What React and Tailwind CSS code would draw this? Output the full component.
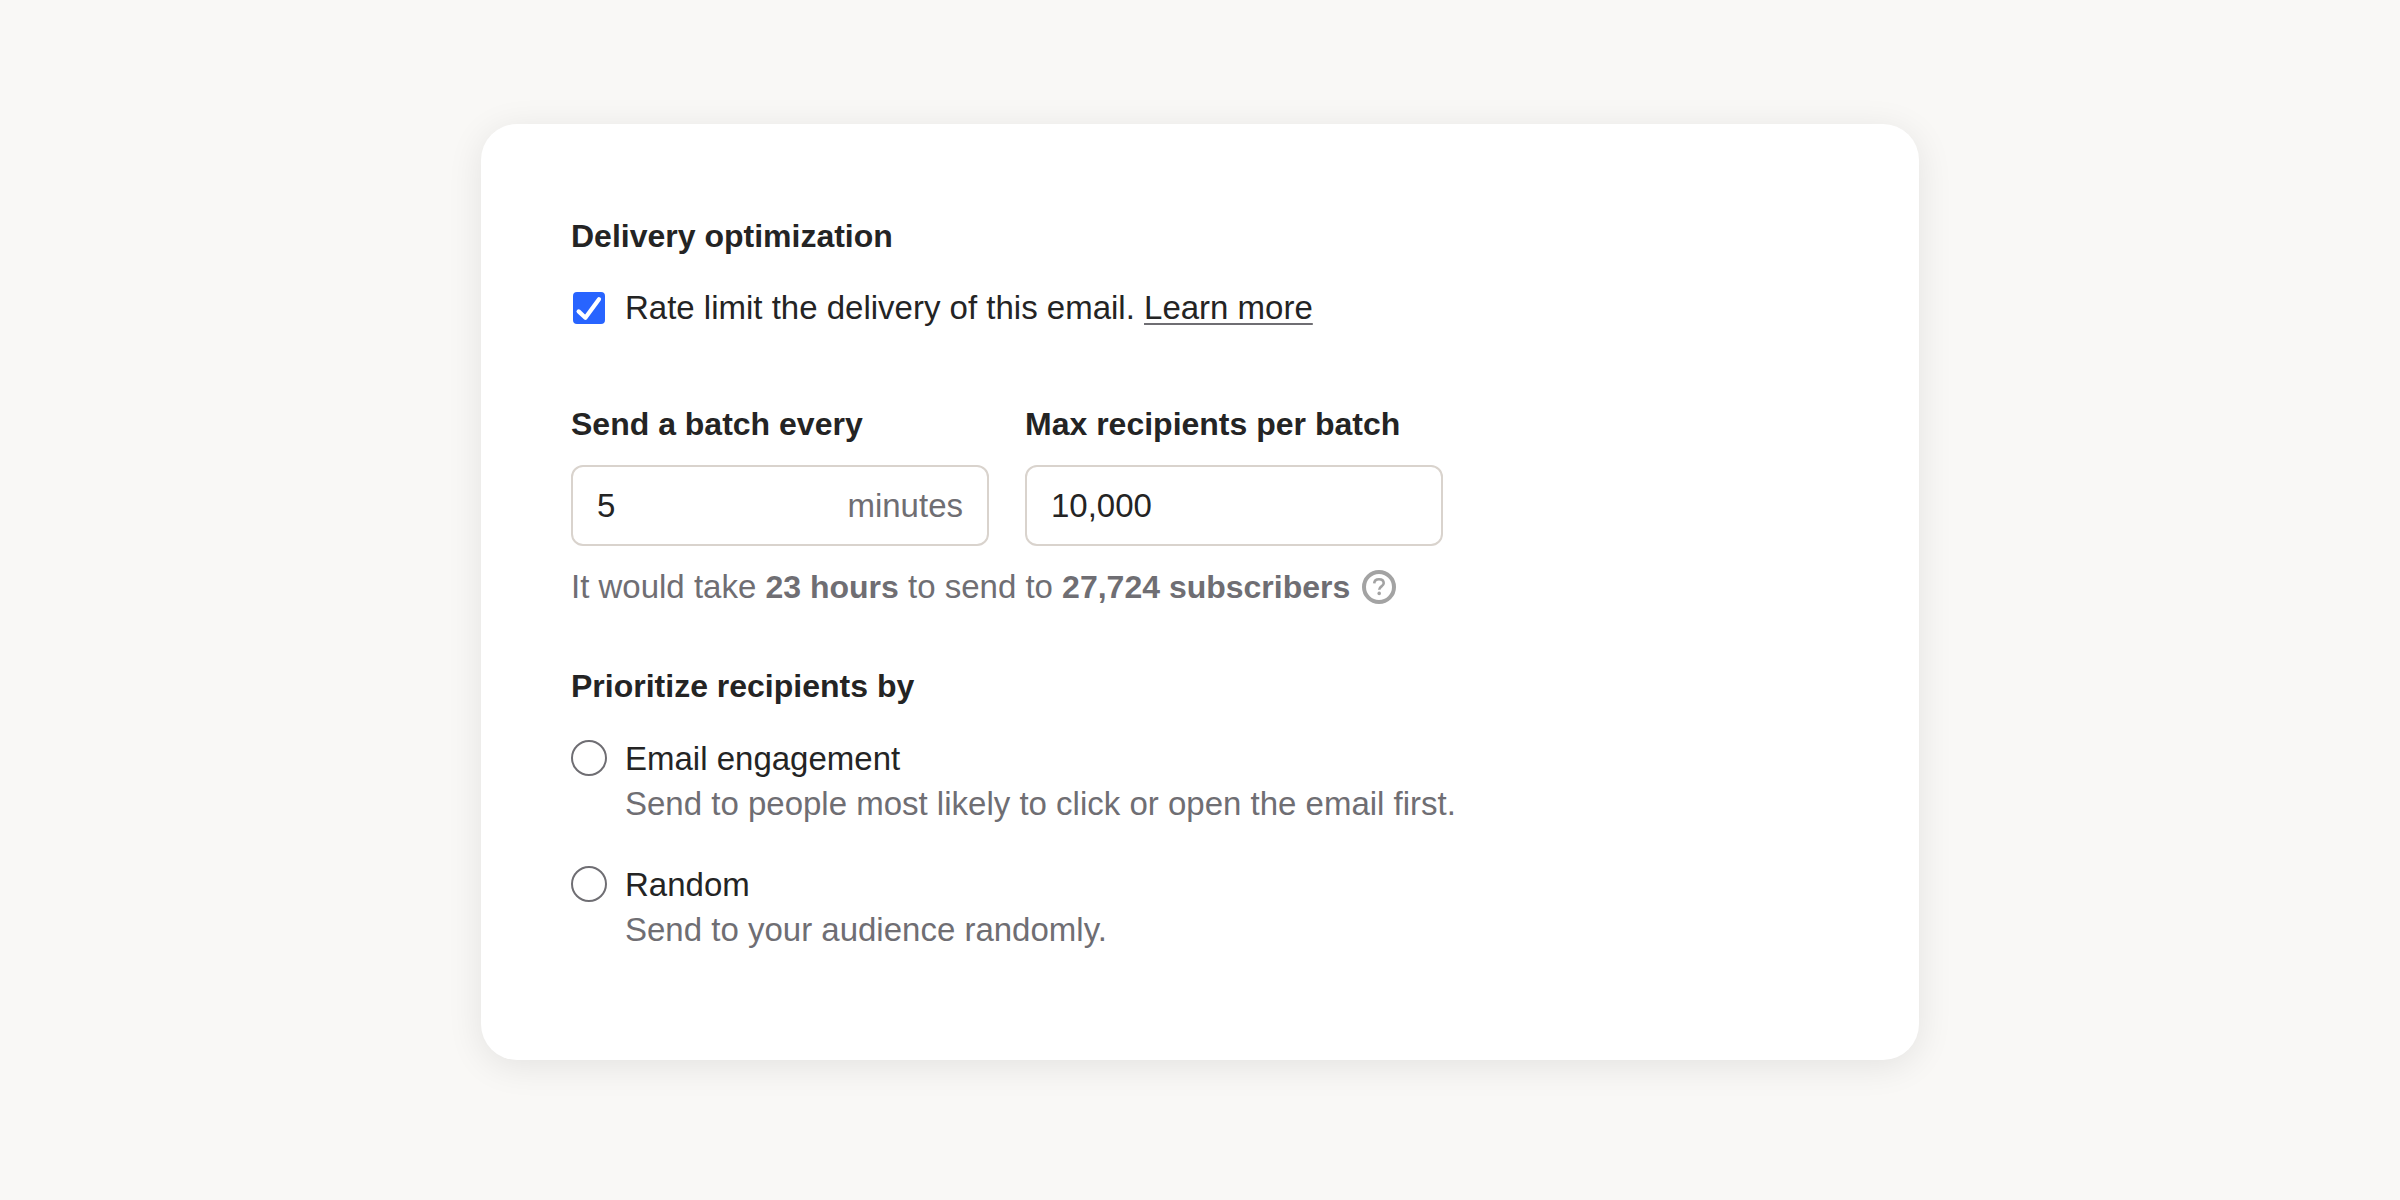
const priorities = [
  {
    id: "engagement",
    label: "Email engagement",
    hint: "Send to people most likely to click or open the email first.",
  },
  { id: "random", label: "Random", hint: "Send to your audience randomly." },
];

function HelpIcon() {
  return (
    <svg viewBox="0 0 34 34" className="size-[34px]" fill="none" aria-hidden="true">
      <circle cx="17" cy="17" r="15" stroke="#a3a3a3" strokeWidth="4" />
      <path
        d="M12.2 13.4C12.4 10.4 14.2 9.2 17 9.2C19.8 9.2 21.7 10.8 21.7 13.2C21.7 16.4 17.2 16.4 17.2 19.8"
        stroke="#a3a3a3"
        strokeWidth="2.6"
      />
      <circle cx="17.2" cy="23.4" r="1.8" fill="#a3a3a3" />
    </svg>
  );
}

function Field({ id, label, value, suffix }) {
  return (
    <div className="w-[418px]">
      <label htmlFor={id} className="block text-[32px] leading-[45px] font-bold">
        {label}
      </label>
      <div className="mt-[18px] flex items-center rounded-xl border-2 border-[#d9d3cd] px-6 py-4">
        <input
          id={id}
          type="text"
          inputMode="numeric"
          defaultValue={value}
          className="w-0 min-w-0 flex-1 bg-transparent outline-none"
        />
        {suffix && <span className="text-[#6f6e73]">{suffix}</span>}
      </div>
    </div>
  );
}

export default function App() {
  return (
    <main className="min-h-screen bg-[#f9f8f6] px-6 pt-[124px] pb-24 font-['Liberation_Sans',Arial,sans-serif] text-[33px] leading-[45px] text-[#242424]">
      <form className="mx-auto w-full max-w-[1438px] rounded-[36px] bg-white px-[90px] pt-[90px] pb-[108px] shadow-[0_6px_36px_rgba(0,0,0,0.09)]">
        <h2 className="text-[32px] leading-[45px] font-bold">Delivery optimization</h2>

        <div className="mt-[26px] flex items-center gap-[18px]">
          <span className="grid size-9 shrink-0 place-items-center">
            <input
              id="rate-limit"
              type="checkbox"
              defaultChecked
              className="peer col-start-1 row-start-1 size-8 appearance-none rounded border-2 border-[#2864ff] checked:bg-[#2864ff]"
            />
            <svg
              viewBox="0 0 32 32"
              className="pointer-events-none invisible col-start-1 row-start-1 size-8 peer-checked:visible"
              fill="none"
              aria-hidden="true"
            >
              <path
                d="M5.6 19.4L12.4 25.8L26 7.2"
                stroke="white"
                strokeWidth="4.2"
                strokeLinecap="round"
                strokeLinejoin="round"
              />
            </svg>
          </span>
          <p>
            <label htmlFor="rate-limit">Rate limit the delivery of this email.</label>{" "}
            <a href="#learn-more" className="underline decoration-[#6f6e73] decoration-2 underline-offset-4">
              Learn more
            </a>
          </p>
        </div>

        <div className="mt-[72px] flex flex-wrap gap-9">
          <Field id="interval" label="Send a batch every" value="5" suffix="minutes" />
          <Field id="max-recipients" label="Max recipients per batch" value="10,000" />
        </div>

        <div className="mt-[18px] flex items-center gap-3 text-[#6f6e73]">
          <p>
            It would take <strong className="text-[32px]">23 hours</strong> to send to{" "}
            <strong className="text-[32px]">27,724 subscribers</strong>
          </p>
          <button type="button" aria-label="How this is calculated">
            <HelpIcon />
          </button>
        </div>

        <fieldset className="mt-[54px]">
          <legend className="text-[32px] leading-[45px] font-bold">Prioritize recipients by</legend>
          <div className="mt-[27px] flex flex-col gap-9">
            {priorities.map(({ id, label, hint }) => (
              <div key={id} className="flex gap-[18px]">
                <input
                  id={id}
                  type="radio"
                  name="priority"
                  aria-describedby={`${id}-hint`}
                  className="mt-1 size-9 shrink-0 appearance-none rounded-full border-2 border-[#6f6e73] checked:border-10 checked:border-[#2864ff]"
                />
                <div>
                  <label htmlFor={id} className="block">
                    {label}
                  </label>
                  <p id={`${id}-hint`} className="text-[#6f6e73]">
                    {hint}
                  </p>
                </div>
              </div>
            ))}
          </div>
        </fieldset>
      </form>
    </main>
  );
}
